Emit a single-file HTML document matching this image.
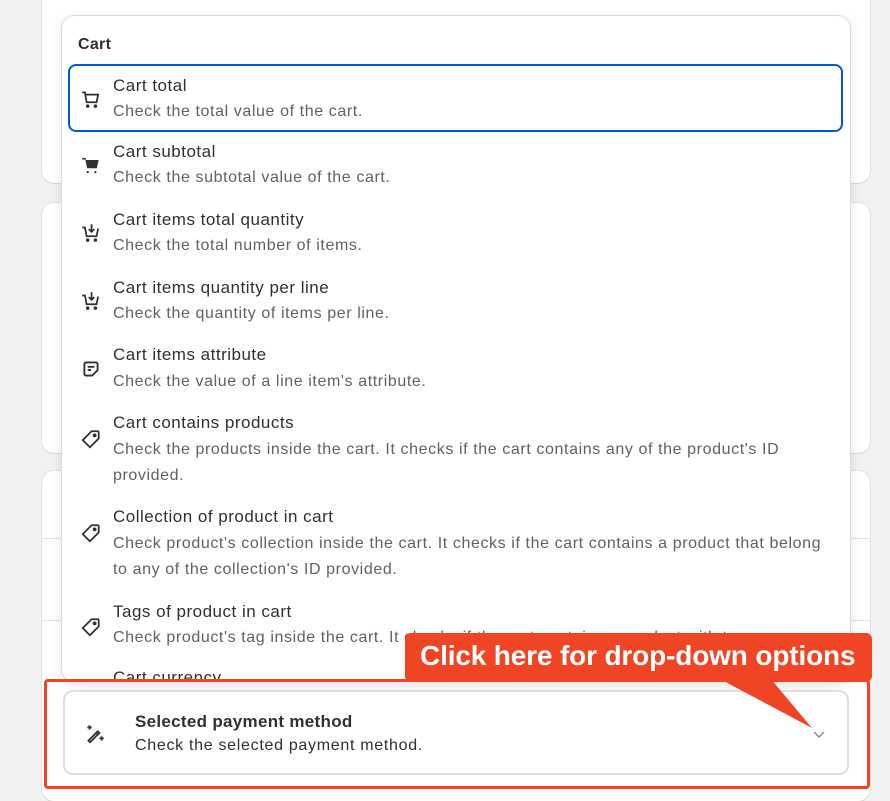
<!DOCTYPE html>
<html><head><meta charset="utf-8"><style>
*{box-sizing:border-box;margin:0;padding:0}
body{width:890px;height:792px;overflow:hidden;background:#f1f1f1;font-family:"Liberation Sans",sans-serif;position:relative;color:#303030}
.card{position:absolute;left:42px;width:828px;background:#fff;border-radius:12px;box-shadow:0 1px 0 #d4d4d4,0 0 0 1px #e3e3e3}
.dd{position:absolute;left:62px;top:16px;width:788px;height:665px;background:#fff;border-radius:12px;box-shadow:0 0 0 1px #dcdcdc,0 4px 12px rgba(0,0,0,.12);overflow:hidden}
.h{position:absolute;left:16px;top:20px;font-weight:bold;font-size:16px;color:#303030;letter-spacing:.3px}
.it{position:absolute;left:6px;width:775px}
.it .t{position:absolute;left:45px;font-size:17px;letter-spacing:.5px;color:#303030}
.it .d{position:absolute;left:45px;font-size:16px;letter-spacing:.6px;color:#616161;line-height:26px;width:720px}
.it svg{position:absolute;left:12px}
.sel{border:2px solid #005bd3;border-radius:8px;height:68px}
.red{position:absolute;left:44px;top:679px;width:826px;height:110px;border:3px solid #ef4524;border-radius:4px}
.inner{position:absolute;left:63px;top:690px;width:786px;height:85px;border:2px solid #dedede;border-radius:10px;background:#fff}
.call{position:absolute;left:405px;top:633px;width:467px;height:49px;background:#ef4524;border-radius:6px;color:#fff;font-weight:bold;font-size:28px;line-height:46px;padding-left:15px;letter-spacing:-0.15px;white-space:nowrap}
</style></head><body>
<div class="card" style="top:-12px;height:195px"></div>
<div class="card" style="top:203px;height:250px"></div>
<div class="card" style="top:471px;height:330px"></div>
<div style="position:absolute;left:42px;top:538px;width:828px;height:1px;background:#e3e3e3"></div>
<div style="position:absolute;left:42px;top:620px;width:828px;height:1px;background:#e3e3e3"></div>

<div class="dd">
<div class="h">Cart</div>
<div class="it sel" style="top:48px">
<svg width="22" height="22" viewBox="0 0 20 20" style="top:22px;left:10px" fill="none" stroke="#303030" stroke-width="1.6"><path d="M2 4h2.5l1.5 9h9l1.5-7H5"/><circle cx="7" cy="16.5" r=".8" fill="#303030"/><circle cx="14" cy="16.5" r=".8" fill="#303030"/></svg>
<div class="t" style="top:10px;left:43px">Cart total</div><div class="d" style="top:33px;left:43px">Check the total value of the cart.</div></div>
<div class="it" style="top:116px">
<svg width="22" height="22" viewBox="0 0 20 20" style="top:22px" fill="#303030"><path d="M2 3.5h3l.5 2H17l-1.8 7.5H6.5L4.8 5H2z"/><circle cx="7" cy="16.5" r="1"/><circle cx="14" cy="16.5" r="1"/></svg>
<div class="t" style="top:10px">Cart subtotal</div><div class="d" style="top:33px">Check the subtotal value of the cart.</div></div>
<div class="it" style="top:184px">
<svg width="22" height="22" viewBox="0 0 20 20" style="top:22px" fill="none" stroke="#303030" stroke-width="1.6"><path d="M2 5h2.5l1.5 8h9l1.5-7"/><path d="M10.5 2v7M8 6.5l2.5 2.5 2.5-2.5"/><circle cx="7" cy="16.5" r=".8" fill="#303030"/><circle cx="14" cy="16.5" r=".8" fill="#303030"/></svg>
<div class="t" style="top:10px">Cart items total quantity</div><div class="d" style="top:33px">Check the total number of items.</div></div>
<div class="it" style="top:252px">
<svg width="22" height="22" viewBox="0 0 20 20" style="top:22px" fill="none" stroke="#303030" stroke-width="1.6"><path d="M2 5h2.5l1.5 8h9l1.5-7"/><path d="M10.5 2v7M8 6.5l2.5 2.5 2.5-2.5"/><circle cx="7" cy="16.5" r=".8" fill="#303030"/><circle cx="14" cy="16.5" r=".8" fill="#303030"/></svg>
<div class="t" style="top:10px">Cart items quantity per line</div><div class="d" style="top:33px">Check the quantity of items per line.</div></div>
<div class="it" style="top:320px">
<svg width="22" height="22" viewBox="0 0 20 20" style="top:22px" fill="none" stroke="#303030" stroke-width="1.7"><path d="M11 16H5.5A1.5 1.5 0 0 1 4 14.5v-9A1.5 1.5 0 0 1 5.5 4h9A1.5 1.5 0 0 1 16 5.5V11l-5 5z"/><path d="M7 8h6M7 11h3"/></svg>
<div class="t" style="top:9px">Cart items attribute</div><div class="d" style="top:33px">Check the value of a line item's attribute.</div></div>
<div class="it" style="top:388px">
<svg width="22" height="22" viewBox="0 0 20 20" style="top:24px" fill="none" stroke="#303030" stroke-width="1.6"><path d="M10.5 3H16a1 1 0 0 1 1 1v5.5L9 17.5 2.5 11z"/><circle cx="13.3" cy="6.7" r=".9" fill="#303030"/></svg>
<div class="t" style="top:9px">Cart contains products</div><div class="d" style="top:33px">Check the products inside the cart. It checks if the cart contains any of the product's ID provided.</div></div>
<div class="it" style="top:482px">
<svg width="22" height="22" viewBox="0 0 20 20" style="top:24px" fill="none" stroke="#303030" stroke-width="1.6"><path d="M10.5 3H16a1 1 0 0 1 1 1v5.5L9 17.5 2.5 11z"/><circle cx="13.3" cy="6.7" r=".9" fill="#303030"/></svg>
<div class="t" style="top:9px">Collection of product in cart</div><div class="d" style="top:33px">Check product's collection inside the cart. It checks if the cart contains a product that belong to any of the collection's ID provided.</div></div>
<div class="it" style="top:577px">
<svg width="22" height="22" viewBox="0 0 20 20" style="top:23px" fill="none" stroke="#303030" stroke-width="1.6"><path d="M10.5 3H16a1 1 0 0 1 1 1v5.5L9 17.5 2.5 11z"/><circle cx="13.3" cy="6.7" r=".9" fill="#303030"/></svg>
<div class="t" style="top:9px">Tags of product in cart</div><div class="d" style="top:32px">Check product's tag inside the cart. It checks if the cart contains a product with tags.</div></div>
<div class="it" style="top:645px"><div class="t" style="top:7px">Cart currency</div></div>
</div>

<div class="red"></div>
<div class="inner">
<svg width="22" height="22" viewBox="0 0 20 20" style="position:absolute;left:19px;top:31px" fill="none" stroke="#303030" stroke-width="1.6"><path d="M4 16l8.5-8.5 1.5 1.5L5.5 17.5z"/><path d="M11 9l1.5 1.5"/><path d="M5 2v4M3 4h4M16 12v4M14 14h4"/></svg>
<div style="position:absolute;left:70px;top:20px;font-weight:bold;font-size:17px;letter-spacing:.3px;color:#303030">Selected payment method</div>
<div style="position:absolute;left:70px;top:45px;font-size:16px;letter-spacing:.7px;color:#303030">Check the selected payment method.</div>
<svg width="14" height="10" viewBox="0 0 14 10" style="position:absolute;left:747px;top:38px" fill="none" stroke="#8a8a8a" stroke-width="1.5"><path d="M2 2l5 5 5-5"/></svg>
</div>
<svg width="890" height="792" style="position:absolute;left:0;top:0"><polygon points="718,678 770,678 812,728" fill="#ef4524"/></svg>
<div class="call">Click here for drop-down options</div>
</body></html>
